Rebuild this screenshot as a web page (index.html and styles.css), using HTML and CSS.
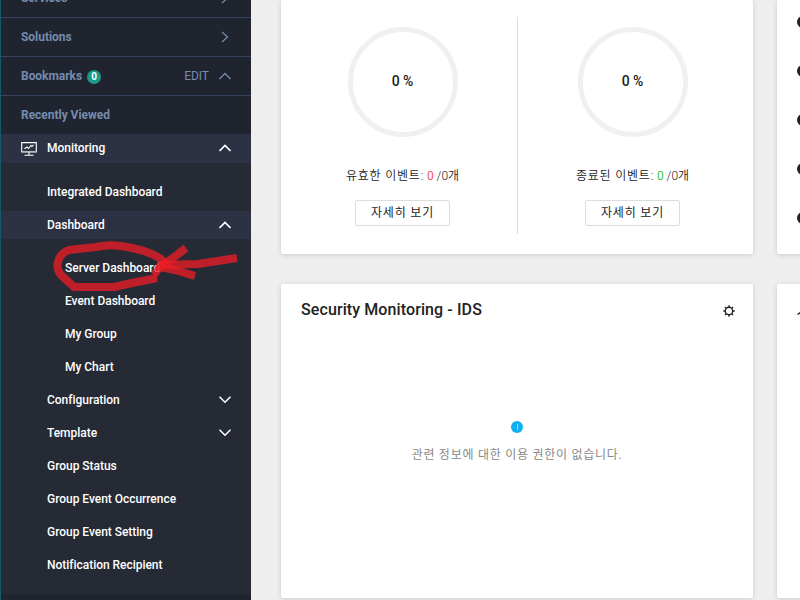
FILE: index.html
```html
<!DOCTYPE html>
<html lang="ko">
<head>
<meta charset="utf-8">
<title>Dashboard</title>
<link rel="stylesheet" href="styles.css">
</head>
<body>
<div class="app">
  <nav class="sidebar">
    <div class="section first"><span>Services</span><svg class="chev" viewBox="0 0 12 12"><path d="M3 1 8.500 6 3 11"/></svg></div>
    <div class="section"><span>Solutions</span><svg class="chev" viewBox="0 0 12 12"><path d="M3 1 8.500 6 3 11"/></svg></div>
    <div class="section"><span>Bookmarks</span><span class="badge">0</span><span class="edit">EDIT</span><svg class="chev" viewBox="0 0 12 12"><path d="M.5 9 6 3.500 11.500 9"/></svg></div>
    <div class="section last"><span>Recently Viewed</span></div>
    <div class="group">
      <svg class="monitor" viewBox="0 0 16 14"><path d="M.7.6h14.600v9.400H.7zM8 10v3M3.500 13.300h9"/><path d="M.7 9.500h14.600" class="base"/><path d="M3.500 6.800 6 5l1.500 1.500L10 3.500l1 1 1.500-1.700"/></svg>
      <span>Monitoring</span><svg class="chev" viewBox="0 0 12 12"><path d="M.5 9 6 3.500 11.500 9"/></svg>
    </div>
    <div class="menu">
      <a class="item">Integrated Dashboard</a>
      <a class="item open"><span>Dashboard</span><svg class="chev" viewBox="0 0 12 12"><path d="M.5 9 6 3.500 11.500 9"/></svg></a>
      <div class="submenu">
        <a class="item">Server Dashboard</a>
        <a class="item">Event Dashboard</a>
        <a class="item">My Group</a>
        <a class="item">My Chart</a>
      </div>
      <a class="item"><span>Configuration</span><svg class="chev" viewBox="0 0 12 12"><path d="M.5 2.700 6 8.200l5.500-5.500"/></svg></a>
      <a class="item"><span>Template</span><svg class="chev" viewBox="0 0 12 12"><path d="M.5 2.700 6 8.200l5.500-5.500"/></svg></a>
      <a class="item">Group Status</a>
      <a class="item">Group Event Occurrence</a>
      <a class="item">Group Event Setting</a>
      <a class="item">Notification Recipient</a>
    </div>
  </nav>
  <main class="content">
    <section class="card events">
      <div class="stat">
        <div class="ring">0 %</div>
        <p class="count"><span class="ko">유효한 이벤트:</span> <b class="red">0</b> /0개</p>
        <button class="more">자세히 보기</button>
      </div>
      <div class="stat">
        <div class="ring">0 %</div>
        <p class="count"><span class="ko">종료된 이벤트:</span> <b class="green">0</b> /0개</p>
        <button class="more">자세히 보기</button>
      </div>
    </section>
    <section class="card list">
      <i class="dot"></i><i class="dot"></i><i class="dot"></i><i class="dot"></i><i class="dot"></i>
    </section>
    <section class="card ids">
      <header class="head"><h2>Security Monitoring - IDS</h2>
        <svg class="gear" viewBox="0 0 12 12"><circle cx="6" cy="6" r="3.700"/><path d="M6 .3v2M6 9.700v2M.3 6h2M9.700 6h2M2 2l1.300 1.300M8.700 8.700 10 10M10 2 8.700 3.300M3.300 8.700 2 10"/></svg>
      </header>
      <div class="empty"><span class="info"></span><p>관련 정보에 대한 이용 권한이 없습니다.</p></div>
    </section>
    <section class="card side"><svg class="peek" viewBox="0 0 10 10"><path d="M.5 6.500 5 3.500"/></svg></section>
  </main>
</div>
<svg class="markup" viewBox="0 0 192 60">
  <path d="M118 27 113 21 106 17 96 13 84 10Q65 5 48 9L21 12Q12 15 10 24 8 31 13 37L26 49H66L84 45 109 40"/>
  <path d="M189 20 150 26 113 27 106 37"/>
  <path d="M138 10 129 17 112 29 127 32 147 38"/>
</svg>
</body>
</html>
```
FILE: styles.css
```css
* { box-sizing: border-box; }
body { margin: 0; background: #eee; font-family: Roboto, "Noto Sans CJK KR", sans-serif; overflow: hidden; }
.app { display: flex; height: 600px; overflow: hidden; }
.sidebar { width: 251px; flex: none; background: #20242e; border-left: 1px solid #17566b; font-size: 12px; font-weight: 500; letter-spacing: -.03px; color: #fff; }
.section { height: 39px; display: flex; align-items: center; padding: 0 20px; border-bottom: 1px solid #36435c; color: #748caf; font-weight: 700; }
.section.first { margin-top: -21px; }
.section.last { height: 38px; border: 0; }
.chev { width: 12px; height: 12px; margin-left: auto; fill: none; stroke: currentColor; stroke-width: 1.6; }
.section .chev { stroke-width: 1.25; }
.badge { width: 14px; height: 14px; border-radius: 50%; background: #1b9887; color: #fff; font-size: 10px; line-height: 14px; text-align: center; margin: 2px 0 0 5px; }
.edit { margin-left: auto; font-weight: 400; }
.edit + .chev { margin-left: 10px; }
.group { height: 29px; display: flex; align-items: center; padding: 0 20px 2px; background: #2c3244; }
.monitor { width: 16px; height: 14px; margin: 3px 10px 0 0; fill: none; stroke: #fff; stroke-width: 1.1; }
.monitor .base { stroke: #bbb; }
.menu { background: #252a35; padding: 15px 0; height: 431px; display: flex; flex-direction: column; gap: 5px; }
.item { height: 28px; display: flex; align-items: center; padding: 0 20px 0 46px; }
.open { background: #2c3244; }
.submenu { display: flex; flex-direction: column; gap: 5px; padding-top: 10px; }
.submenu .item { padding-left: 64px; }
.content { padding-left: 30px; display: grid; grid-template-columns: 472px 472px; grid-template-rows: 254px 314px; gap: 30px 24px; color: #222; }
.card { background: #fff; border-radius: 2px; box-shadow: 0 1px 5px rgba(0,0,0,.15); }
.events { display: flex; padding-top: 17px; }
.stat { width: 237px; height: 217px; display: flex; flex-direction: column; align-items: center; padding: 10px 0 0 7px; border-right: 1px solid #ddd; }
.stat + .stat { border: 0; width: 229px; padding-left: 0; }
.ring { width: 110px; height: 110px; border: 5px solid #f0f0f0; border-radius: 50%; font-size: 14px; font-weight: 500; line-height: 99px; text-align: center; }
.count { margin: 29px 0 0; height: 20px; line-height: 20px; font-size: 12px; font-weight: 350; white-space: nowrap; }
.count b { font-weight: 400; }
.ko { letter-spacing: .8px; }
.red { color: #f4516c; }
.green { color: #3cc43c; }
.more { width: 95px; height: 26px; margin-top: 14px; padding: 0 0 4px; background: #fff; border: 1px solid #ddd; border-radius: 2px; font: 12px Roboto, "Noto Sans CJK KR", sans-serif; letter-spacing: .8px; color: #222; }
.list { padding: 16px 0 0 20px; display: flex; flex-direction: column; gap: 37px; }
.dot { width: 12px; height: 12px; flex: none; border-radius: 50%; background: #222; }
.head { display: flex; justify-content: space-between; align-items: center; height: 52px; padding: 0 18px 1px 20px; }
.head h2 { margin: 0; font-size: 16px; font-weight: 500; letter-spacing: .1px; }
.gear { width: 12px; height: 12px; margin-top: 2px; fill: none; stroke: #222; stroke-width: 1.4; }
.empty { display: flex; flex-direction: column; align-items: center; padding-top: 85px; color: #888; font-size: 12px; }
.empty p { margin: 12px 0 0; line-height: 20px; letter-spacing: .73px; }
.info { width: 12px; height: 12px; border-radius: 50%; background: #12aeef; display: flex; justify-content: center; align-items: center; }
.info::before { content: ""; width: 1px; height: 6px; background: #8bdcfb; }
.peek { width: 10px; height: 10px; margin: 24px 0 0 20px; fill: none; stroke: #222; stroke-width: 1.5; display: block; }
.markup { position: absolute; left: 48px; top: 238px; width: 192px; height: 60px; fill: none; stroke: #ed1c24; stroke-opacity: .77; stroke-width: 8; stroke-linejoin: round; }
```
